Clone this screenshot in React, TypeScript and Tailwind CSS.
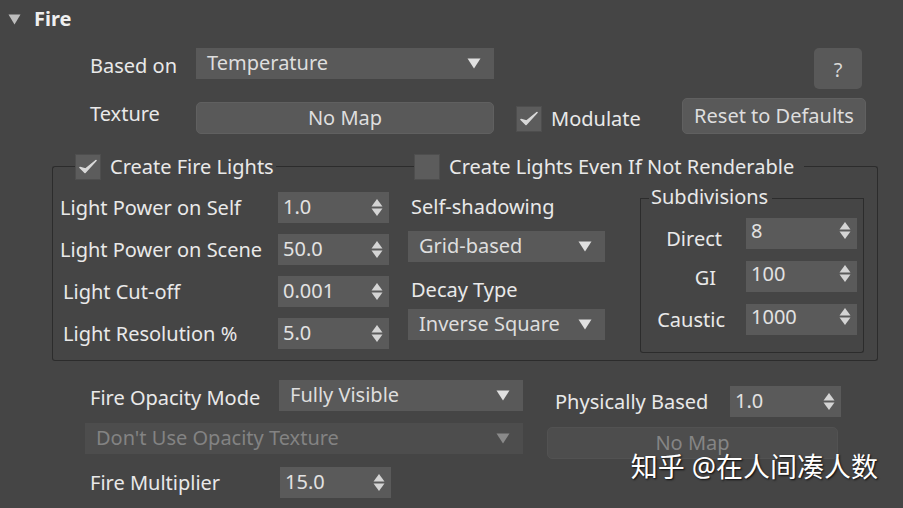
import React from 'react';

const font = '"Noto Sans", "Noto Sans CJK SC", sans-serif';

function SpinArrows() {
  return (
    <svg width="12" height="19" viewBox="0 0 12 19" className="shrink-0">
      <path d="M6 1 L11.5 8.5 L0.5 8.5 Z" fill="#d4d4d4" />
      <path d="M0.5 10.5 L11.5 10.5 L6 18 Z" fill="#d4d4d4" />
    </svg>
  );
}

function DownArrow({ dim }: { dim?: boolean }) {
  return (
    <svg width="14" height="11" viewBox="0 0 14 11" className="shrink-0">
      <path d="M0.5 0.5 L13.5 0.5 L7 10.5 Z" fill={dim ? '#8a8a8a' : '#e0e0e0'} />
    </svg>
  );
}

function Spinner({ value }: { value: string }) {
  return (
    <div className="w-[111px] h-[31px] bg-[#5a5a5a] flex items-center justify-between pl-[5px] pr-[6px] shrink-0">
      <span className="text-[#e2e2e2] -mt-[2px]">{value}</span>
      <SpinArrows />
    </div>
  );
}

function Dropdown({ value, w, dim }: { value: string; w: string; dim?: boolean }) {
  return (
    <div
      className={`${w} h-[31px] flex items-center justify-between pl-[11px] pr-[13px] shrink-0 ${
        dim ? 'bg-[#4d4d4d] text-[#838383]' : 'bg-[#595959] text-[#dedede]'
      }`}
    >
      <span className="-mt-[2px] whitespace-nowrap">{value}</span>
      <DownArrow dim={dim} />
    </div>
  );
}

function Check({ on }: { on?: boolean }) {
  return (
    <div className="w-[26px] h-[26px] bg-[#5c5c5c] border border-[#4e4e4e] flex items-center justify-center shrink-0">
      {on && (
        <svg width="18" height="16" viewBox="0 0 18 16">
          <path d="M1 8.5 L6 13.5 L17 1.5 L6.5 10 Z" fill="#d8d8d8" stroke="#d8d8d8" strokeWidth="1.6" strokeLinejoin="round" />
        </svg>
      )}
    </div>
  );
}

export default function App() {
  return (
    <div
      className="w-[903px] h-[508px] bg-[#454545] text-[#e9e9e9] text-[20px] leading-none relative overflow-hidden"
      style={{ fontFamily: font }}
    >
      {/* Rollout title */}
      <div className="flex items-center h-[38px] pl-[8px]">
        <svg width="13" height="11" viewBox="0 0 13 11" className="mr-[13px]">
          <path d="M0.5 0.5 L12.5 0.5 L6.5 10.5 Z" fill="#bdbdbd" />
        </svg>
        <span className="font-bold text-[20px] text-[#efefef]">Fire</span>
      </div>

      {/* Based on */}
      <div className="flex items-start mt-[10px] pl-[90px] pr-[41px]">
        <div className="w-[106px] h-[31px] flex items-center pt-[5px]">Based on</div>
        <Dropdown value="Temperature" w="w-[298px]" />
        <div className="ml-auto w-[48px] h-[41px] rounded-[5px] bg-[#595959] flex items-center justify-center text-[#d8d8d8] pt-[3px]">
          ?
        </div>
      </div>

      {/* Texture */}
      <div className="flex items-center mt-[9px] pl-[90px] pr-[37px]">
        <div className="w-[106px] -mt-[4px]">Texture</div>
        <div className="w-[298px] h-[32px] rounded-[5px] bg-[#595959] border border-[#606060] flex items-center justify-center text-[#dedede] mt-[4px]">
          No Map
        </div>
        <div className="ml-[22px] mt-[5px] flex items-center">
          <Check on />
          <span className="ml-[9px]">Modulate</span>
        </div>
        <div className="ml-auto w-[184px] h-[36px] rounded-[5px] bg-[#595959] border border-[#606060] flex items-center justify-center text-[#dedede]">
          Reset to Defaults
        </div>
      </div>

      {/* Fire lights group */}
      <div className="ml-[52px] w-[826px] mt-[19px]">
        <div className="flex h-[27px]">
          <div className="w-[23px] mt-[13px] border-t border-l border-[#2c2c2c] rounded-tl-[3px]" />
          <div className="w-[339px] flex items-center">
            <Check on />
            <span className="ml-[9px] whitespace-nowrap">Create Fire Lights</span>
            <div className="flex-1 self-start mt-[13px] border-t border-[#2c2c2c] ml-[2px]" />
          </div>
          <div className="flex-1 flex items-center">
            <Check />
            <span className="ml-[9px] whitespace-nowrap">Create Lights Even If Not Renderable</span>
            <div className="flex-1 self-stretch mt-[13px] border-t border-r border-[#2c2c2c] rounded-tr-[3px] ml-[10px]" />
          </div>
        </div>
        <div className="h-[181px] border-l border-r border-b border-[#2c2c2c] rounded-b-[3px] flex">
          {/* Light params */}
          <div className="flex flex-col gap-[11px] pt-[12px] pl-[7px]">
            {[
              ['Light Power on Self', '1.0', ''],
              ['Light Power on Scene', '50.0', ''],
              ['Light Cut-off', '0.001', 'pl-[3px]'],
              ['Light Resolution %', '5.0', 'pl-[3px]'],
            ].map(([label, value, pad]) => (
              <div key={label} className="flex items-center h-[31px]">
                <div className={`w-[218px] whitespace-nowrap ${pad}`}>{label}</div>
                <Spinner value={value} />
              </div>
            ))}
          </div>

          {/* Shadow / decay */}
          <div className="ml-[19px] pt-[17px] flex flex-col">
            <div className="pl-[3px] h-[22px]">Self-shadowing</div>
            <div className="mt-[12px]">
              <Dropdown value="Grid-based" w="w-[197px]" />
            </div>
            <div className="pl-[3px] mt-[18px] h-[22px]">Decay Type</div>
            <div className="mt-[7px]">
              <Dropdown value="Inverse Square" w="w-[197px]" />
            </div>
          </div>

          {/* Subdivisions */}
          <div className="ml-[35px] mt-[17px] w-[224px] h-[156px] flex flex-col">
            <div className="flex h-[2px]">
              <div className="w-[9px] mt-px border-t border-l border-[#2c2c2c] rounded-tl-[3px]" />
              <span className="-mt-[10px] px-[2px] whitespace-nowrap">Subdivisions</span>
              <div className="flex-1 mt-px border-t border-r border-[#2c2c2c] rounded-tr-[3px] ml-[2px]" />
            </div>
            <div className="flex-1 border-l border-r border-b border-[#2c2c2c] rounded-b-[3px] flex flex-col gap-[12px] pt-[19px] pl-[4px]">
              {[
                ['Direct', '8', 'pr-[24px] pt-[10px]'],
                ['GI', '100', 'pr-[30px] pt-[2px]'],
                ['Caustic', '1000', 'pr-[21px]'],
              ].map(([label, value, pad]) => (
                <div key={label} className="flex items-center h-[31px]">
                  <div className={`w-[101px] text-right ${pad}`}>{label}</div>
                  <div className="w-[111px] h-[31px] bg-[#5a5a5a] flex items-start justify-between pl-[5px] pr-[6px] pt-[3px]">
                    <span className="text-[#e2e2e2]">{value}</span>
                    <SpinArrows />
                  </div>
                </div>
              ))}
            </div>
          </div>
        </div>
      </div>

      {/* Opacity */}
      <div className="flex mt-[19px] ml-[85px]">
        <div className="w-[438px] flex flex-col">
          <div className="flex items-center h-[31px] pl-[5px]">
            <div className="w-[189px] pt-[4px]">Fire Opacity Mode</div>
            <Dropdown value="Fully Visible" w="w-[244px]" />
          </div>
          <div className="mt-[12px]">
            <Dropdown value="Don't Use Opacity Texture" w="w-[438px]" dim />
          </div>
          <div className="flex items-center h-[31px] pl-[5px] mt-[13px]">
            <div className="w-[190px]">Fire Multiplier</div>
            <Spinner value="15.0" />
          </div>
        </div>
        <div className="ml-[24px] pt-[6px] flex flex-col">
          <div className="flex items-center h-[31px] pl-[8px]">
            <div className="w-[175px]">Physically Based</div>
            <Spinner value="1.0" />
          </div>
          <div className="mt-[10px] w-[291px] h-[32px] rounded-[5px] bg-[#4d4d4d] border border-[#525252] flex items-center justify-center text-[#858585]">
            No Map
          </div>
        </div>
      </div>

      {/* watermark */}
      <div className="absolute right-[25px] top-[453px] text-[27px] text-white [text-shadow:1px_1px_2px_rgba(0,0,0,0.85)] whitespace-nowrap">
        知乎 @在人间凑人数
      </div>
    </div>
  );
}
